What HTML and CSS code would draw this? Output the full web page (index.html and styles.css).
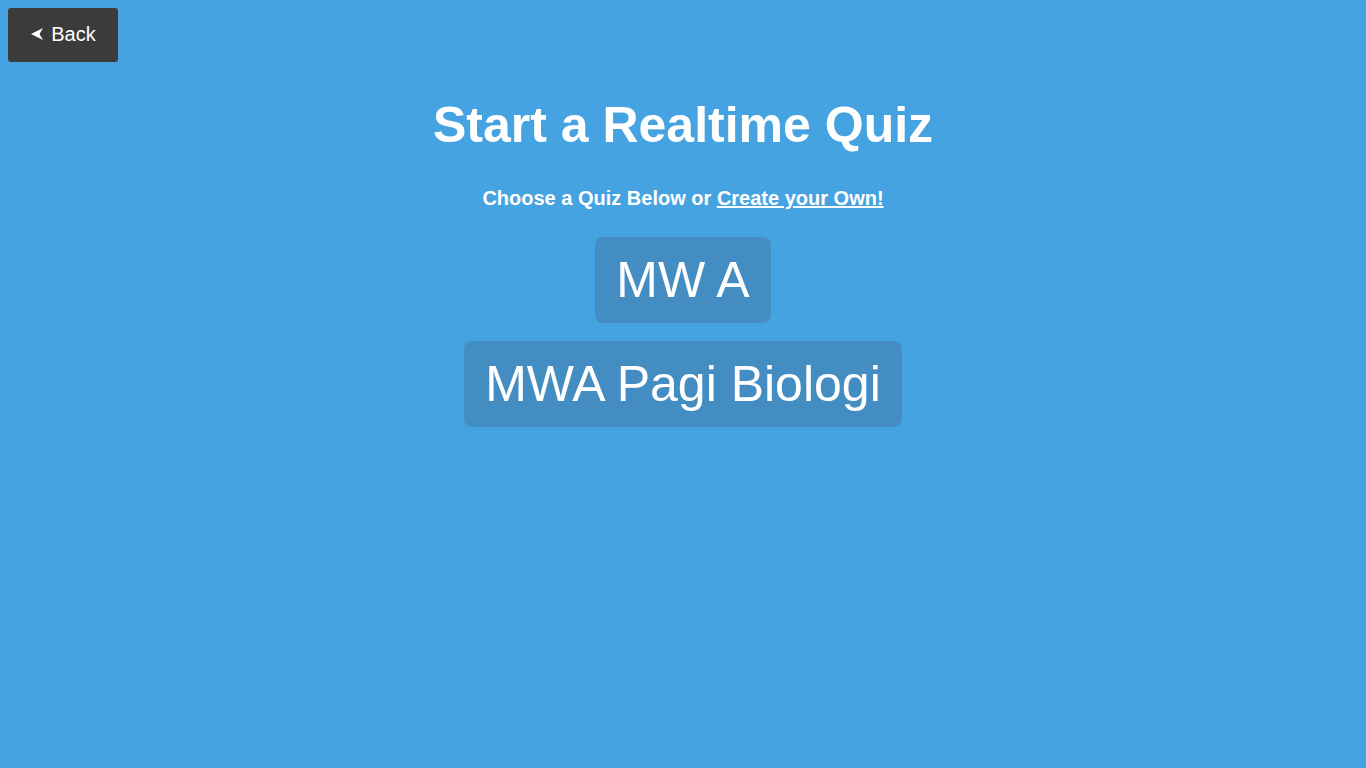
FILE: index.html
```html
<!DOCTYPE html>
<html>
<head>
<meta charset="utf-8">
<link rel="stylesheet" href="styles.css">
</head>
<body>
<a class="back" href="#">
  <svg class="back-icon" width="12" height="12" viewBox="0 0 12 12"><polygon points="0,6 12,0 8.5,6 12,12" fill="#fff"/></svg>
  <span>Back</span>
</a>
<main class="content">
  <h1 class="title">Start a Realtime Quiz</h1>
  <p class="subtitle">Choose a Quiz Below or <a href="#">Create your Own!</a></p>
  <div class="quizzes">
    <a class="quiz" href="#">MW A</a>
    <a class="quiz" href="#">MWA Pagi Biologi</a>
  </div>
</main>
</body>
</html>
```
FILE: styles.css
```css
html, body {
  margin: 0;
  padding: 0;
  background: #46a3e2;
  font-family: "Liberation Sans", Arial, sans-serif;
  color: #fff;
  height: 100%;
}
.back {
  position: absolute;
  left: 8px;
  top: 8px;
  width: 110px;
  height: 54px;
  box-sizing: border-box;
  padding: 0 0 2px 1px;
  background: #3b3b3b;
  border-radius: 3px;
  color: #fff;
  text-decoration: none;
  font-size: 20px;
  display: flex;
  align-items: center;
  justify-content: center;
  gap: 8px;
}
.back-icon { display: block; margin-top: 0; }
.content {
  display: flex;
  flex-direction: column;
  align-items: center;
  padding-top: 92px;
}
.title {
  margin: 0;
  font-size: 50px;
  font-weight: bold;
  line-height: 66px;
}
.subtitle {
  margin: 28px 0 0;
  font-size: 20px;
  font-weight: bold;
  line-height: 24px;
}
.subtitle a { color: #fff; text-decoration: underline; }
.quizzes {
  margin-top: 27px;
  display: flex;
  flex-direction: column;
  align-items: center;
  gap: 18px;
}
.quiz {
  display: block;
  background: #438dc3;
  color: #fff;
  text-decoration: none;
  border-radius: 8px;
  font-size: 50px;
  line-height: 58px;
  padding: 14px 21px;
}
```
